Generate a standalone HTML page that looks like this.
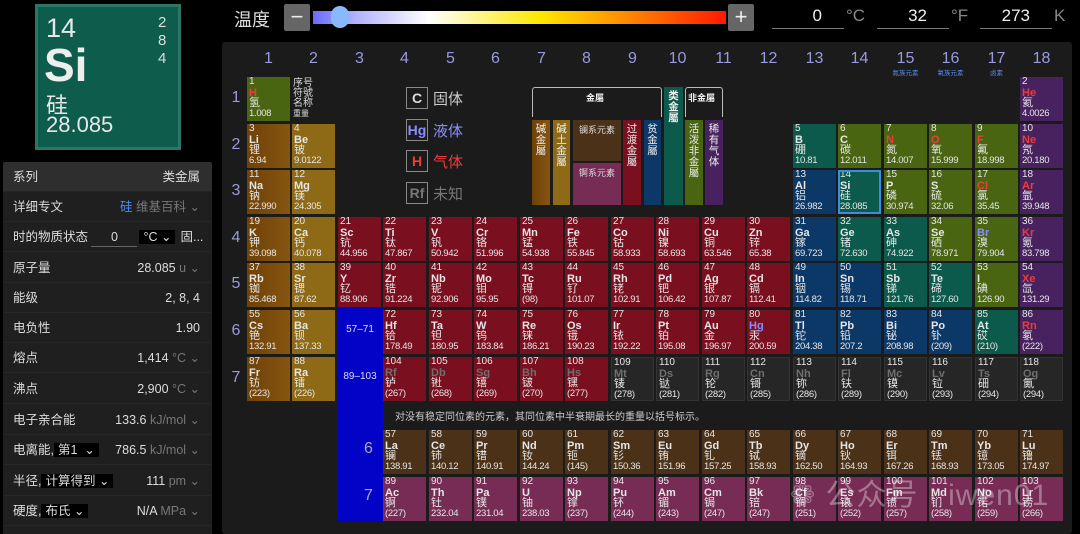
<!DOCTYPE html>
<html><head><meta charset="utf-8">
<style>
*{margin:0;padding:0;box-sizing:border-box}
body{width:1080px;height:534px;background:#000;overflow:hidden;position:relative;font-family:"Liberation Sans","Noto Sans CJK SC",sans-serif;color:#ddd}
.a{position:absolute}
.cell{position:absolute;width:43px;height:44px;padding:0 0 0 2px;font-size:10px;line-height:10.6px;color:#e6e6e6;overflow:hidden;white-space:nowrap}
.cell b{display:block;font-size:11px}
.cell i{font-style:normal;display:block;font-size:11px}
.cell s{text-decoration:none;display:block;font-size:9.5px;letter-spacing:-0.3px}
.alk{background:linear-gradient(90deg,#6e4106,#865511)}
.ae{background:#8e6a16}
.tm{background:#7a0f1f}
.pm{background:#0c3867}
.md{background:#0c5a4b}
.nm{background:#4a6512}
.ng{background:#47225f}
.uk{background:#262626;border:1px solid #333}
.ln{background:#4a3118}
.ac{background:#772c55}
.gas{color:#ee3b3b}.liq{color:#8c8cff}.unk{color:#6f6f6f}
.gl{position:absolute;top:50px;width:43px;text-align:center;font-size:16px;color:#9a9ae0}
.rl{position:absolute;left:226px;width:20px;text-align:center;font-size:16px;color:#9a9ae0}
.row{position:absolute;left:3px;width:209px;height:30px;font-size:12.5px;line-height:30px;padding:0 10px;border-bottom:1px solid #262626;white-space:nowrap;overflow:hidden}
.row .r{position:absolute;right:12px;top:0}
.u{color:#777}
.dd{background:#000;color:#ddd;padding:0 4px}
.leg{position:absolute;font-size:10.5px;color:#eee;line-height:11px;padding-top:4px;text-align:center;word-break:break-all}
</style></head><body>
<div class="a" style="left:35px;top:4px;width:146px;height:146px;background:#0e5c4c;border:3px solid #2d7565"></div>
<div class="a" style="left:46px;top:13px;font-size:27px;color:#e8e8e8">14</div>
<div class="a" style="left:44px;top:38px;font-size:46px;font-weight:bold;color:#eee">Si</div>
<div class="a" style="left:46px;top:88px;font-size:22px;color:#e8e8e8">硅</div>
<div class="a" style="left:46px;top:112px;font-size:22px;color:#e8e8e8">28.085</div>
<div class="a" style="left:158px;top:14px;font-size:15px;line-height:18px;color:#ddd;text-align:center">2<br>8<br>4</div>

<div class="a" style="left:3px;top:162px;width:209px;height:372px;background:#1f1f1f"></div>
<div class="row" style="top:162px;background:#2e2e2e;border-radius:3px 3px 0 0">系列<span class="r">类金属</span></div>
<div class="row" style="top:192px">详细专文<span class="r"><span style="color:#4a8cf0">硅</span> <span class="u">维基百科 ⌄</span></span></div>
<div class="row" style="top:222px">时的物质状态 <span style="display:inline-block;width:46px;text-align:center;border-bottom:1px solid #666;line-height:18px">0</span><span class="dd" style="margin-left:2px">°C ⌄</span><span style="margin-left:5px">固...</span></div>
<div class="row" style="top:253px">原子量<span class="r">28.085 <span class="u">u ⌄</span></span></div>
<div class="row" style="top:283px">能级<span class="r">2, 8, 4</span></div>
<div class="row" style="top:313px">电负性<span class="r">1.90</span></div>
<div class="row" style="top:343px">熔点<span class="r">1,414 <span class="u">°C ⌄</span></span></div>
<div class="row" style="top:374px">沸点<span class="r">2,900 <span class="u">°C ⌄</span></span></div>
<div class="row" style="top:405px">电子亲合能<span class="r">133.6 <span class="u">kJ/mol ⌄</span></span></div>
<div class="row" style="top:435px">电离能,<span class="dd">第1 &nbsp;⌄</span><span class="r">786.5 <span class="u">kJ/mol ⌄</span></span></div>
<div class="row" style="top:466px">半径,<span class="dd">计算得到 ⌄</span><span class="r">111 <span class="u">pm ⌄</span></span></div>
<div class="row" style="top:496px">硬度,<span class="dd">布氏 ⌄</span><span class="r">N/A <span class="u">MPa ⌄</span></span></div>

<div class="a" style="left:234px;top:6px;font-size:18px;color:#ddd">温度</div>
<div class="a" style="left:284px;top:4px;width:26px;height:27px;background:#666;border-radius:2px;color:#eee;font-size:22px;text-align:center;line-height:25px">−</div>
<div class="a" style="left:313px;top:11px;width:413px;height:13px;background:linear-gradient(90deg,#6a6aff,#b0b0ff 10%,#fff 28%,#ffe800 55%,#ff8000 78%,#ff1800)"></div>
<div class="a" style="left:331px;top:6px;width:18px;height:22px;border-radius:9px;background:#8ab8ff"></div>
<div class="a" style="left:728px;top:4px;width:26px;height:27px;background:#666;border-radius:2px;color:#eee;font-size:22px;text-align:center;line-height:25px">+</div>
<div class="a" style="left:772px;top:6px;width:72px;height:23px;border-bottom:1px solid #777;text-align:right;padding-right:22px;font-size:17px;color:#eee">0</div>
<div class="a" style="left:846px;top:6px;font-size:17px;color:#888">°C</div>
<div class="a" style="left:877px;top:6px;width:72px;height:23px;border-bottom:1px solid #777;text-align:right;padding-right:22px;font-size:17px;color:#eee">32</div>
<div class="a" style="left:951px;top:6px;font-size:17px;color:#888">°F</div>
<div class="a" style="left:980px;top:6px;width:72px;height:23px;border-bottom:1px solid #777;text-align:right;padding-right:22px;font-size:17px;color:#eee">273</div>
<div class="a" style="left:1054px;top:6px;font-size:17px;color:#888">K</div>

<div class="a" style="left:222px;top:42px;width:850px;height:492px;background:#1b1b1b;border-radius:3px"></div>

<div class="a" style="left:293px;top:79px;font-size:10px;line-height:10px;color:#ddd">序号<br>符號<br>名称<br><span style="font-size:8px">重量</span></div>

<div class="a" style="left:406px;top:87px;width:22px;height:22px;border:1px solid #888;font-size:14px;font-weight:bold;text-align:center;line-height:20px;color:#ddd">C</div>
<div class="a" style="left:433px;top:88px;font-size:15px;color:#ccc">固体</div>
<div class="a" style="left:406px;top:119px;width:22px;height:22px;border:1px solid #888;font-size:14px;font-weight:bold;text-align:center;line-height:20px;color:#8c8cff">Hg</div>
<div class="a" style="left:433px;top:120px;font-size:15px;color:#8c8cff">液体</div>
<div class="a" style="left:406px;top:150px;width:22px;height:22px;border:1px solid #888;font-size:14px;font-weight:bold;text-align:center;line-height:20px;color:#ee3b3b">H</div>
<div class="a" style="left:433px;top:151px;font-size:15px;color:#ee3b3b">气体</div>
<div class="a" style="left:406px;top:182px;width:22px;height:22px;border:1px solid #888;font-size:14px;font-weight:bold;text-align:center;line-height:20px;color:#777">Rf</div>
<div class="a" style="left:433px;top:183px;font-size:15px;color:#777">未知</div>

<div class="a" style="left:532px;top:87px;width:130px;height:30px;border:1px solid #bbb;border-bottom:none;border-radius:3px 3px 0 0"></div>
<div class="a" style="left:586px;top:91px;font-size:9px;font-weight:bold;color:#eee">金屬</div>
<div class="a" style="left:685px;top:87px;width:38px;height:30px;border:1px solid #bbb;border-bottom:none;border-radius:3px 3px 0 0"></div>
<div class="a" style="left:688px;top:91px;font-size:9px;font-weight:bold;color:#eee">非金屬</div>
<div class="leg alk" style="left:532px;top:120px;width:18px;height:85px">碱<br>金<br>屬</div>
<div class="leg ae" style="left:553px;top:120px;width:17px;height:85px">碱<br>土<br>金<br>屬</div>
<div class="a ln" style="left:573px;top:120px;width:48px;height:41px;font-size:9px;color:#ddd;text-align:center;padding-top:3px">镧系元素</div>
<div class="a ac" style="left:573px;top:163px;width:48px;height:42px;font-size:9px;color:#ddd;text-align:center;padding-top:3px">锕系元素</div>
<div class="leg tm" style="left:623px;top:120px;width:18px;height:85px">过<br>渡<br>金<br>屬</div>
<div class="leg pm" style="left:644px;top:120px;width:17px;height:85px">贫<br>金<br>屬</div>
<div class="leg md" style="left:664px;top:87px;width:19px;height:118px;font-weight:bold">类<br>金<br>屬</div>
<div class="leg nm" style="left:685px;top:120px;width:18px;height:85px">活<br>泼<br>非<br>金<br>屬</div>
<div class="leg ng" style="left:705px;top:120px;width:18px;height:85px">稀<br>有<br>气<br>体</div>

<div class="a" style="left:337px;top:308px;width:46px;height:214px;background:#0303c8"></div>
<div class="a" style="left:337px;top:324px;width:46px;text-align:center;font-size:10px;color:#dde">57–71</div>
<div class="a" style="left:337px;top:371px;width:46px;text-align:center;font-size:10px;color:#dde">89–103</div>
<div class="a" style="left:364px;top:440px;font-size:16px;color:#aab">6</div>
<div class="a" style="left:364px;top:487px;font-size:16px;color:#aab">7</div>
<div class="a" style="left:395px;top:408px;font-size:10px;color:#ccc">对没有稳定同位素的元素，其同位素中半衰期最长的重量以括号标示。</div>

<div id="t"></div>
<div class="a" style="left:790px;top:470px;font-size:30px;color:rgba(255,255,255,0.35);letter-spacing:1px">❁ 公众号 · iwen01</div>

<script>
var E="H 氢 1.008|He 氦 4.0026|Li 锂 6.94|Be 铍 9.0122|B 硼 10.81|C 碳 12.011|N 氮 14.007|O 氧 15.999|F 氟 18.998|Ne 氖 20.180|Na 钠 22.990|Mg 镁 24.305|Al 铝 26.982|Si 硅 28.085|P 磷 30.974|S 硫 32.06|Cl 氯 35.45|Ar 氩 39.948|K 钾 39.098|Ca 钙 40.078|Sc 钪 44.956|Ti 钛 47.867|V 钒 50.942|Cr 铬 51.996|Mn 锰 54.938|Fe 铁 55.845|Co 钴 58.933|Ni 镍 58.693|Cu 铜 63.546|Zn 锌 65.38|Ga 镓 69.723|Ge 锗 72.630|As 砷 74.922|Se 硒 78.971|Br 溴 79.904|Kr 氪 83.798|Rb 铷 85.468|Sr 锶 87.62|Y 钇 88.906|Zr 锆 91.224|Nb 铌 92.906|Mo 钼 95.95|Tc 锝 (98)|Ru 钌 101.07|Rh 铑 102.91|Pd 钯 106.42|Ag 银 107.87|Cd 镉 112.41|In 铟 114.82|Sn 锡 118.71|Sb 锑 121.76|Te 碲 127.60|I 碘 126.90|Xe 氙 131.29|Cs 铯 132.91|Ba 钡 137.33|La 镧 138.91|Ce 铈 140.12|Pr 镨 140.91|Nd 钕 144.24|Pm 钷 (145)|Sm 钐 150.36|Eu 铕 151.96|Gd 钆 157.25|Tb 铽 158.93|Dy 镝 162.50|Ho 钬 164.93|Er 铒 167.26|Tm 铥 168.93|Yb 镱 173.05|Lu 镥 174.97|Hf 铪 178.49|Ta 钽 180.95|W 钨 183.84|Re 铼 186.21|Os 锇 190.23|Ir 铱 192.22|Pt 铂 195.08|Au 金 196.97|Hg 汞 200.59|Tl 铊 204.38|Pb 铅 207.2|Bi 铋 208.98|Po 钋 (209)|At 砹 (210)|Rn 氡 (222)|Fr 钫 (223)|Ra 镭 (226)|Ac 锕 (227)|Th 钍 232.04|Pa 镤 231.04|U 铀 238.03|Np 镎 (237)|Pu 钚 (244)|Am 镅 (243)|Cm 锔 (247)|Bk 锫 (247)|Cf 锎 (251)|Es 锿 (252)|Fm 镄 (257)|Md 钔 (258)|No 锘 (259)|Lr 铹 (266)|Rf 𬬻 (267)|Db 𬭊 (268)|Sg 𬭳 (269)|Bh 𬭛 (270)|Hs 𬭶 (277)|Mt 鿏 (278)|Ds 𫟼 (281)|Rg 𬬭 (282)|Cn 鿔 (285)|Nh 鿭 (286)|Fl 𫓧 (289)|Mc 镆 (290)|Lv 𫟷 (293)|Ts 鿬 (294)|Og 鿫 (294)".split("|");
function cat(z){
 if([3,11,19,37,55,87].indexOf(z)>=0)return"alk";
 if([4,12,20,38,56,88].indexOf(z)>=0)return"ae";
 if([13,31,49,50,81,82,83,84].indexOf(z)>=0)return"pm";
 if([5,14,32,33,51,52,85].indexOf(z)>=0)return"md";
 if([1,6,7,8,9,15,16,17,34,35,53].indexOf(z)>=0)return"nm";
 if([2,10,18,36,54,86].indexOf(z)>=0)return"ng";
 if(z>=57&&z<=71)return"ln";if(z>=89&&z<=103)return"ac";
 if(z>=109)return"uk";return"tm";}
function pos(z){
 if(z==1)return[1,1];if(z==2)return[18,1];
 if(z<=10)return[z<=4?z-2:z+8,2];
 if(z<=18)return[z<=12?z-10:z,3];
 if(z<=36)return[z-18,4];if(z<=54)return[z-36,5];
 if(z>=57&&z<=71)return[z-53,8];if(z>=89&&z<=103)return[z-85,9];
 if(z<=56)return[z-54,6];if(z<=86)return[z-68,6];
 if(z<=88)return[z-86,7];return[z-100,7];}
var gas=[1,2,7,8,9,10,17,18,36,54,86],liq=[35,80];
var h="";
for(var z=1;z<=118;z++){
 var p=pos(z),d=E[z-1].split(" ");
 var x=Math.round(247+(p[0]-1)*45.47),y;
 if(p[1]==8)y=430;else if(p[1]==9)y=477;else y=Math.round(77+(p[1]-1)*46.6);
 var sc=gas.indexOf(z)>=0?"gas":liq.indexOf(z)>=0?"liq":z>=104?"unk":"";
 var st=z==14?"outline:2px solid #3a8ee0;outline-offset:-2px;":"";
 h+='<div class="cell '+cat(z)+'" style="left:'+x+'px;top:'+y+'px;'+st+'">'+z+'<b class="'+sc+'">'+d[0]+'</b><i>'+d[1]+'</i><s>'+d[2]+'</s></div>';
}
for(var g=1;g<=18;g++){var x=Math.round(247+(g-1)*45.47);h+='<div class="gl" style="left:'+x+'px">'+g+'</div>';}
var sub={15:"氮族元素",16:"氧族元素",17:"卤素"};
for(var k in sub){var x=Math.round(247+(k-1)*45.47);h+='<div class="a" style="left:'+x+'px;top:67px;width:43px;text-align:center;font-size:6.5px;color:#5a8ae8">'+sub[k]+'</div>';}
for(var r=1;r<=7;r++){h+='<div class="rl" style="top:'+Math.round(89+(r-1)*46.6)+'px">'+r+'</div>';}
document.getElementById("t").innerHTML=h;
</script>
</body></html>
